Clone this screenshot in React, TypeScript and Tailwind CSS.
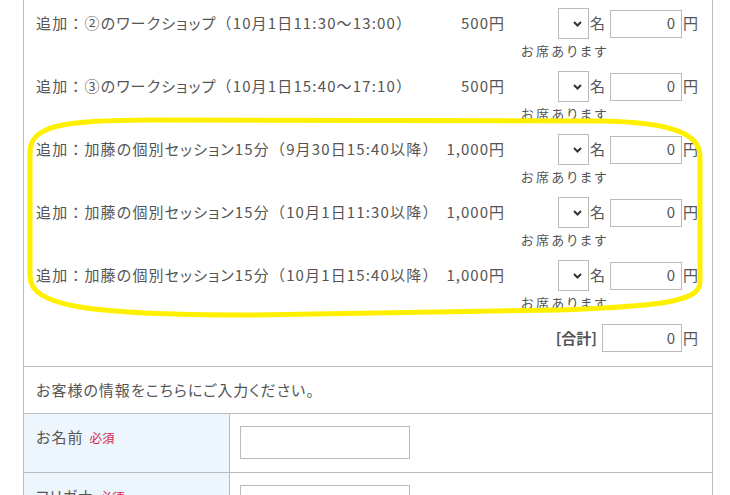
import React from 'react';

type Item = { label: string; price: string };

const items: Item[] = [
  { label: '追加：②のワークショップ（10月1日11:30～13:00）', price: '500円' },
  { label: '追加：③のワークショップ（10月1日15:40～17:10）', price: '500円' },
  { label: '追加：加藤の個別セッション15分（9月30日15:40以降）', price: '1,000円' },
  { label: '追加：加藤の個別セッション15分（10月1日11:30以降）', price: '1,000円' },
  { label: '追加：加藤の個別セッション15分（10月1日15:40以降）', price: '1,000円' },
];

// kana proportional, but full-width punctuation keeps its full width
const Label: React.FC<{ text: string }> = ({ text }) => (
  <>
    {text.split(/([：（）])/).map((part, i) =>
      /^[：（）]$/.test(part) ? (
        <span key={i} className="[font-feature-settings:normal]">
          {part}
        </span>
      ) : (
        <span key={i}>{part}</span>
      )
    )}
  </>
);

const Chevron: React.FC = () => (
  <svg width="9" height="6" viewBox="0 0 9 6" className="block">
    <path d="M1 1 L4.5 4.5 L8 1" fill="none" stroke="#333" strokeWidth="2" />
  </svg>
);

const ItemRow: React.FC<{ item: Item }> = ({ item }) => (
  <div className="flex items-start pl-[12px] h-[63px]">
    <div className="flex-1 h-[31px] flex items-center whitespace-nowrap tracking-[1.15px]">
      <Label text={item.label} />
    </div>
    <div className="h-[31px] flex items-center justify-end">{item.price}</div>
    <div className="w-[207px] flex flex-col">
      <div className="flex items-center justify-end pr-[13px] h-[31px]">
        <div className="w-[31px] h-[31px] border border-[#bbb] bg-white flex items-center justify-end pr-[6px]">
          <Chevron />
        </div>
        <span className="ml-[1px]">名</span>
        <div className="ml-[4px] w-[72px] h-[28px] border border-[#bbb] flex items-center justify-end pr-[5px]">0</div>
        <span className="ml-[1px]">円</span>
      </div>
      <div className="mt-[4px] h-[16px] pl-[16px] text-[13px] tracking-[2.5px] leading-[16px] whitespace-nowrap">
        お席あります
      </div>
    </div>
  </div>
);

const App: React.FC = () => {
  return (
    <div className="relative w-[730px] h-[495px] overflow-hidden bg-white text-[#555] text-[15px] tracking-[1px] [font-feature-settings:'palt'] font-['Noto_Sans_CJK_JP','Noto_Sans',sans-serif]">
      <div className="ml-[23px] w-[690px] border-x border-[#bbb]">
        <div className="pt-[8px]">
          {items.map((it) => (
            <ItemRow key={it.label} item={it} />
          ))}
          <div className="flex items-center justify-end pr-[13px] h-[28px] mt-[1px] mb-[14px]">
            <span className="font-bold tracking-normal">[合計]</span>
            <div className="ml-[5px] w-[80px] h-[28px] border border-[#bbb] flex items-center justify-end pr-[5px]">0</div>
            <span className="ml-[1px]">円</span>
          </div>
        </div>
        <div className="border-t border-[#bbb] h-[47px] pl-[12px] flex items-center">
          お客様の情報をこちらにご入力ください。
        </div>
        <div className="border-t border-[#bbb] flex h-[59px]">
          <div className="w-[206px] bg-[#eef6fd] border-r border-[#bbb] pl-[12px] pt-[12px] leading-[22px]">
            お名前<span className="ml-[6px] text-[12.5px] text-[#d6264a] tracking-normal">必須</span>
          </div>
          <div className="pl-[10px] pt-[12px]">
            <div className="w-[170px] h-[33px] border border-[#bbb]" />
          </div>
        </div>
        <div className="border-t border-[#bbb] flex h-[59px]">
          <div className="w-[206px] bg-[#eef6fd] border-r border-[#bbb] pl-[12px] pt-[12px] leading-[22px]">
            フリガナ<span className="ml-[6px] text-[12.5px] text-[#d6264a] tracking-normal">必須</span>
          </div>
          <div className="pl-[10px] pt-[12px]">
            <div className="w-[170px] h-[33px] border border-[#bbb]" />
          </div>
        </div>
      </div>
      <svg className="absolute left-0 top-0 pointer-events-none" width="730" height="495" viewBox="0 0 730 495">
        <path
          d="M30 152 C30 126 62 120 150 120 L600 121 C672 122 700 134 700 156 L700 282 C700 300 670 306 560 310 L250 315 C86 315 30 306 30 276 Z"
          fill="none"
          stroke="#fff000"
          strokeWidth="5"
        />
      </svg>
    </div>
  );
};

export default App;
